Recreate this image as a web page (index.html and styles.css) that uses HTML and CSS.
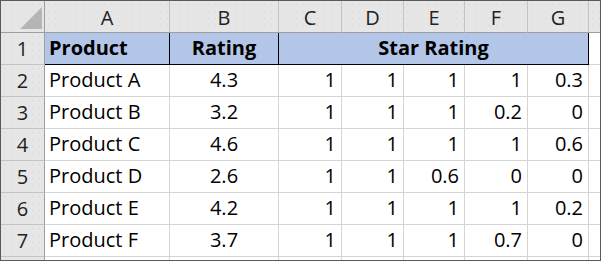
FILE: index.html
```html
<!DOCTYPE html>
<html>
<head>
<meta charset="utf-8">
<link rel="stylesheet" href="styles.css">
</head>
<body>
<div class="sheet">
  <div class="hd corner"><span class="tri"></span></div>
  <div class="hd col">A</div>
  <div class="hd col">B</div>
  <div class="hd col">C</div>
  <div class="hd col">D</div>
  <div class="hd col">E</div>
  <div class="hd col">F</div>
  <div class="hd col">G</div>
  <div class="hd col last"></div>

  <div class="hd row">1</div>
  <div class="c title bl">Product</div>
  <div class="c title ctr">Rating</div>
  <div class="c title ctr star">Star Rating</div>
  <div class="c last"></div>

  <div class="hd row">2</div>
  <div class="c">Product A</div><div class="c ctr">4.3</div>
  <div class="c num">1</div><div class="c num">1</div><div class="c num">1</div><div class="c num">1</div><div class="c num">0.3</div><div class="c last"></div>

  <div class="hd row">3</div>
  <div class="c">Product B</div><div class="c ctr">3.2</div>
  <div class="c num">1</div><div class="c num">1</div><div class="c num">1</div><div class="c num">0.2</div><div class="c num">0</div><div class="c last"></div>

  <div class="hd row">4</div>
  <div class="c">Product C</div><div class="c ctr">4.6</div>
  <div class="c num">1</div><div class="c num">1</div><div class="c num">1</div><div class="c num">1</div><div class="c num">0.6</div><div class="c last"></div>

  <div class="hd row">5</div>
  <div class="c">Product D</div><div class="c ctr">2.6</div>
  <div class="c num">1</div><div class="c num">1</div><div class="c num">0.6</div><div class="c num">0</div><div class="c num">0</div><div class="c last"></div>

  <div class="hd row">6</div>
  <div class="c">Product E</div><div class="c ctr">4.2</div>
  <div class="c num">1</div><div class="c num">1</div><div class="c num">1</div><div class="c num">1</div><div class="c num">0.2</div><div class="c last"></div>

  <div class="hd row">7</div>
  <div class="c">Product F</div><div class="c ctr">3.7</div>
  <div class="c num">1</div><div class="c num">1</div><div class="c num">1</div><div class="c num">0.7</div><div class="c num">0</div><div class="c last"></div>

  <div class="hd row stub"></div>
  <div class="c stub"></div><div class="c stub"></div>
  <div class="c stub"></div><div class="c stub"></div><div class="c stub"></div><div class="c stub"></div><div class="c stub"></div><div class="c stub last"></div>
</div>
</body>
</html>
```
FILE: styles.css
```css
html, body {
  margin: 0;
  padding: 0;
  background: #ffffff;
}

.sheet {
  width: 601px;
  height: 261px;
  box-sizing: border-box;
  border: 1px solid #5a5a5a;
  display: grid;
  grid-template-columns: 44px 125px 109px 63px 62px 61px 63px 61px 11px;
  grid-template-rows: 32px repeat(7, 32px) 3px;
  font-family: "Open Sans", "Noto Sans", sans-serif;
  font-size: 20px;
  color: #000;
  overflow: hidden;
}

.hd {
  background-color: #e6e6e6;
  background-image: radial-gradient(circle, #d2d2d2 0.7px, transparent 0.8px);
  background-size: 7px 7px;
  box-sizing: border-box;
  color: #222;
  text-align: center;
  line-height: 26px;
  padding-top: 4px;
}

.hd.col {
  border-right: 1px solid #c3c3c3;
  border-bottom: 1px solid #9e9e9e;
}

.hd.col.last {
  border-right: none;
}

.hd.corner {
  border-right: 1px solid #9e9e9e;
  border-bottom: 1px solid #9e9e9e;
  position: relative;
}

.tri {
  position: absolute;
  left: 19px;
  top: 6px;
  width: 22px;
  height: 22px;
  background: #b5b5b5;
  clip-path: polygon(100% 0, 100% 100%, 0 100%);
}

.hd.row {
  border-right: 1px solid #9e9e9e;
  border-bottom: 1px solid #c3c3c3;
  padding-top: 3px;
}

.c {
  box-sizing: border-box;
  border-right: 1px solid #d4d4d4;
  border-bottom: 1px solid #d4d4d4;
  line-height: 26px;
  padding: 2px 4px 0 4px;
  white-space: nowrap;
}

.c.last {
  border-right: none;
}

.ctr {
  text-align: center;
}

.num {
  text-align: right;
  padding-right: 5px;
}

.title {
  background: #b4c6e7;
  font-weight: 700;
  border-right: 1px solid #000;
  border-bottom: 1px solid #000;
}

.star {
  grid-column: span 5;
}

.stub {
  padding: 0;
  border-bottom: none;
}
```
